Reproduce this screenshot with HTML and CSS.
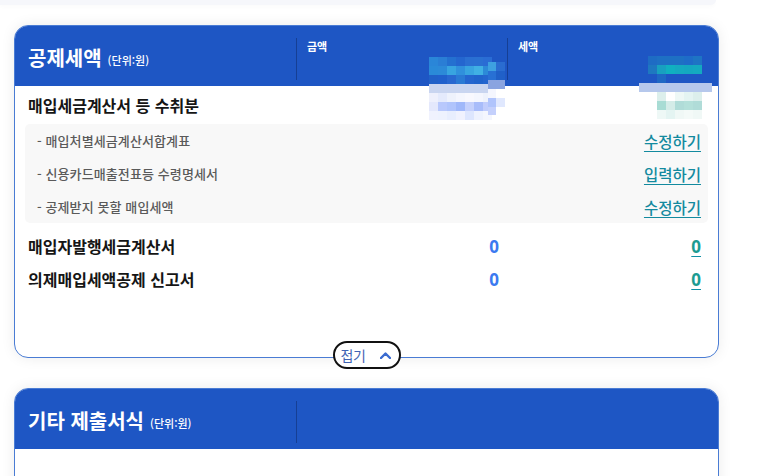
FILE: index.html
```html
<!DOCTYPE html>
<html lang="ko">
<head>
<meta charset="utf-8">
<link rel="stylesheet" href="styles.css">
</head>
<body>
<div class="prev-card"></div>

<section class="card card-main">
  <div class="card-head">
    <div class="head-title"><h2>공제세액</h2><span class="unit">(단위:원)</span></div>
    <div class="head-col">금액</div>
    <div class="head-col">세액</div>
  </div>

  <div class="mosaic mosaic-a">
    <div class="ma r0"></div><div class="ma r1"></div><div class="ma r2"></div><div class="ma r3"></div>
    <div class="ma r4"></div><div class="ma r5"></div><div class="ma r6"></div>
  </div>
  <div class="mosaic mosaic-a2">
    <div class="mb r0"></div><div class="mb r1"></div><div class="mb r2"></div>
    <div class="mb r3"></div><div class="mb r4"></div><div class="mb r5"></div>
  </div>
  <div class="mosaic mosaic-b">
    <div class="mc r0"></div><div class="mc r1"></div><div class="mc r2"></div>
    <div class="mc band"></div>
    <div class="mc r3"></div><div class="mc r4"></div><div class="mc r5"></div>
  </div>

  <div class="card-body">
    <div class="row row-first">
      <div class="row-label">매입세금계산서 등 수취분</div>
      <div class="row-val"></div>
      <div class="row-val"></div>
    </div>
    <div class="sub-box">
      <div class="sub-row"><span class="sub-label">- 매입처별세금계산서합계표</span><a class="link" href="#">수정하기</a></div>
      <div class="sub-row"><span class="sub-label">- 신용카드매출전표등 수령명세서</span><a class="link" href="#">입력하기</a></div>
      <div class="sub-row"><span class="sub-label">- 공제받지 못할 매입세액</span><a class="link" href="#">수정하기</a></div>
    </div>
    <div class="row row-num">
      <div class="row-label">매입자발행세금계산서</div>
      <div class="row-val"><span class="amt">0</span></div>
      <div class="row-val tax-col"><a class="tax" href="#">0</a></div>
    </div>
    <div class="row row-num">
      <div class="row-label">의제매입세액공제 신고서</div>
      <div class="row-val"><span class="amt">0</span></div>
      <div class="row-val tax-col"><a class="tax" href="#">0</a></div>
    </div>
  </div>

  <button class="fold-btn" type="button">접기
    <svg class="chev" width="11" height="7" viewBox="0 0 11 7"><polyline points="1,6 5.5,1.5 10,6" fill="none" stroke="#3a6bd0" stroke-width="2.4" stroke-linecap="round" stroke-linejoin="round"/></svg>
  </button>
</section>

<section class="card card-second">
  <div class="card-head">
    <div class="head-title"><h2>기타 제출서식</h2><span class="unit">(단위:원)</span></div>
    <div class="head-col head-empty"></div>
  </div>
</section>
</body>
</html>
```

FILE: styles.css
```css
* { box-sizing: border-box; }
html, body { margin: 0; padding: 0; }
body {
  background: #fff;
  font-family: "Noto Sans CJK KR", "Noto Sans", sans-serif;
  color: #111;
  width: 778px;
  height: 476px;
  overflow: hidden;
}

.prev-card {
  width: 716px;
  height: 5px;
  background: #f6f7fb;
  border-bottom-right-radius: 8px;
  box-shadow: 0 2px 4px rgba(0,0,0,0.02);
}

.card {
  position: relative;
  width: 705px;
  margin-left: 14px;
  border: 1px solid #4a7cd4;
  border-radius: 14px;
  background: #fff;
  box-shadow: 0 0 14px rgba(0,0,0,0.08);
}
.card-main { margin-top: 20px; }
.card-second { margin-top: 30px; height: 140px; }

.card-head {
  display: grid;
  grid-template-columns: 281px 211px 1fr;
  height: 60px;
  background: #1e56c4;
  border-radius: 13px 13px 0 0;
  color: #fff;
}
.card-second .card-head { grid-template-columns: 281px 1fr; }

.head-title {
  display: flex;
  align-items: center;
  padding-left: 13px;
  gap: 6px;
  padding-top: 2px;
}
.head-title h2 {
  margin: 0;
  font-size: 20px;
  font-weight: 700;
  letter-spacing: 0;
}
.unit {
  font-size: 11px;
  font-weight: 500;
  margin-top: 5px;
}
.head-col {
  margin: 12px 0 6px;
  border-left: 1px solid #163f94;
  padding-left: 10px;
  font-size: 11px;
  font-weight: 700;
  line-height: 16px;
}

.card-body { padding: 0 0 62px; }

.row {
  display: grid;
  grid-template-columns: 281px 211px 1fr;
  align-items: center;
}
.row-first { height: 38px; }
.row-num { height: 33px; }
.sub-box + .row-num { margin-top: 6px; }

.row-label {
  padding-left: 13px;
  font-size: 16px;
  font-weight: 700;
  color: #151515;
  letter-spacing: 0;
}
.row-val {
  text-align: right;
  padding-right: 8px;
}
.row-val.tax-col { padding-right: 17px; }

.amt {
  font-family: "Noto Sans", sans-serif;
  font-weight: 700;
  font-size: 17px;
  color: #3b7af0;
}
.tax {
  font-family: "Noto Sans", sans-serif;
  font-weight: 700;
  font-size: 17px;
  color: #1c9c92;
  text-decoration: underline;
  text-decoration-color: #1190a4;
  text-underline-offset: 3px;
}

.sub-box {
  margin: 0 10px;
  background: #f8f8f8;
  border-radius: 5px;
  padding: 0 7px 0 12px;
}
.sub-row {
  display: flex;
  justify-content: space-between;
  align-items: center;
  height: 33px;
}
.sub-label {
  font-size: 13px;
  font-weight: 500;
  color: #5a5a5a;
  letter-spacing: 0.1px;
}
.link {
  font-size: 15.5px;
  font-weight: 500;
  color: #138a9f;
  letter-spacing: 0;
  text-decoration: underline;
  text-underline-offset: 3px;
}

.fold-btn {
  position: absolute;
  left: 50%;
  bottom: -12px;
  transform: translateX(-50%);
  height: 28px;
  width: 68px;
  border: 2px solid #111;
  border-radius: 14px;
  background: #fff;
  display: flex;
  align-items: center;
  padding: 0 0 0 6px;
  gap: 15px;
  font-family: "Noto Sans CJK KR", sans-serif;
  font-size: 14px;
  color: #3f64b4;
  letter-spacing: -0.5px;
  cursor: pointer;
}
.chev { display: block; }

/* mosaic (obscured values) */
.mosaic { position: absolute; }
.mosaic-a { left: 414px; top: 31px; width: 63px; }
.mosaic-a2 { left: 473px; top: 36px; width: 17px; }
.mosaic-b { left: 624px; top: 30px; width: 73px; }
.ma { height: 9px; }
.mb { height: 9px; }
.mc { height: 9px; margin-left: 9px; width: 54px; }

.ma.r0 { background: linear-gradient(90deg, #2a86d8 0 9px, #2a7ed5 9px 18px, #2470d0 18px 27px, #2466cf 27px 36px, #2a6fd2 36px 45px, #2a70d2 45px 54px, #2a6cd4 54px 63px); }
.ma.r1 { background: linear-gradient(90deg, #2a8ad8 0 9px, #2c8ad8 9px 18px, #38a4e0 18px 27px, #3090dc 27px 36px, #38a4e0 36px 45px, #40b0e4 45px 54px, #2c8ad8 54px 63px); }
.ma.r2 { background: linear-gradient(90deg, #2060c8 0 9px, #2060cc 9px 18px, #2868d0 18px 27px, #2a7ad4 27px 36px, #2466cf 36px 45px, #2064cc 45px 54px, #2466cf 54px 63px); }
.ma.r3 { background: #c9d5f0; }
.ma.r4 { background: linear-gradient(90deg, #eef0fc 0 9px, #e4eafc 9px 18px, #eef2fc 18px 27px, #f4f6fe 27px 36px, #f8f8fe 36px 45px, #f4f6fe 45px 54px, #eef2fc 54px 63px); }
.ma.r5 { background: linear-gradient(90deg, #e4e8fc 0 9px, #b8c8fc 9px 18px, #b0c4fc 18px 27px, #a0b8fa 27px 36px, #c4d0fc 36px 45px, #a8bcfa 45px 54px, #c0ccfc 54px 63px); }
.ma.r6 { background: linear-gradient(90deg, #f0f2fe 0 9px, #eef2fe 9px 18px, #e8eefe 18px 27px, #f0f2fe 27px 36px, #dde6fe 36px 45px, #eef2fe 45px 54px, #f4f6fe 54px 63px); }

.mb.r0 { background: linear-gradient(90deg, #3ea0e0 0 8px, #2a6cd0 8px 17px); }
.mb.r1 { background: linear-gradient(90deg, #2870d4 0 8px, #2060c8 8px 17px); }
.mb.r2 { background: #8aa4e0; }
.mb.r3 { background: linear-gradient(90deg, #f4f6fe 0 8px, #fff 8px 17px); }
.mb.r4 { background: linear-gradient(90deg, #b0c4fc 0 8px, #e0e8fe 8px 17px); }
.mb.r5 { height: 8px; background: linear-gradient(90deg, #c4d0fc 0 8px, transparent 8px 17px); }

.mc.r0 { background: linear-gradient(90deg, #1e6cc4 0 9px, #1e70c4 9px 18px, #1e70c4 18px 27px, #1e70c4 27px 36px, #1e6cc8 36px 45px, #1e74c4 45px 54px); }
.mc.r1 { background: linear-gradient(90deg, #1e78c0 0 9px, #18a0c0 9px 18px, #10b0c0 18px 27px, #14aac0 27px 36px, #14a8c0 36px 45px, #14aac0 45px 54px); }
.mc.r2 { background: linear-gradient(90deg, transparent 0 9px, #1e68c4 9px 18px, transparent 18px 54px); }
.mc.band { margin-left: 0; width: 73px; background: #b6c8ec; }
.mc.r3 { background: linear-gradient(90deg, transparent 0 9px, #dcefec 9px 18px, #fff 18px 27px, #eef8f6 27px 36px, #e4f4f2 36px 45px, #dcefec 45px 54px); }
.mc.r4 { background: linear-gradient(90deg, transparent 0 9px, #a8dcd4 9px 18px, #d4ece8 18px 27px, #b0dcd8 27px 36px, #b4e0da 36px 45px, #b0dcd8 45px 54px); }
.mc.r5 { background: linear-gradient(90deg, transparent 0 9px, #eef8f6 9px 18px, #e4f4f2 18px 27px, #f0f8f6 27px 36px, #f4faf8 36px 45px, #f0f8f6 45px 54px); }
```
